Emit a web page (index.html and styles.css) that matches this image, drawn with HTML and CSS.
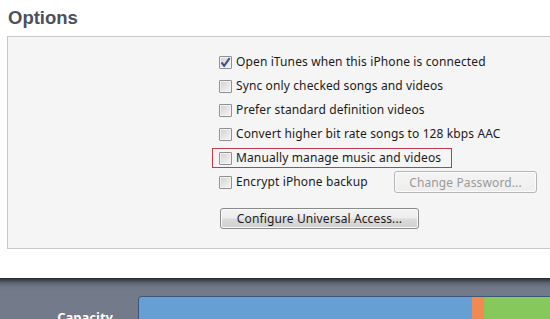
FILE: index.html
```html
<!DOCTYPE html>
<html>
<head>
<meta charset="utf-8">
<link rel="stylesheet" href="styles.css">
</head>
<body>
<h2 class="title">Options</h2>
<div class="box">
  <div class="opts">
    <label class="row"><span class="cb checked"><svg width="11" height="11" viewBox="0 0 11 11"><path d="M1.5 5.5 L4.2 8.8 L9.6 1.2" fill="none" stroke="#3b4f8a" stroke-width="2"/></svg></span><span class="lbl">Open iTunes when this iPhone is connected</span></label>
    <label class="row"><span class="cb"></span><span class="lbl">Sync only checked songs and videos</span></label>
    <label class="row"><span class="cb"></span><span class="lbl">Prefer standard definition videos</span></label>
    <label class="row"><span class="cb"></span><span class="lbl">Convert higher bit rate songs to 128 kbps AAC</span></label>
    <label class="row highlight"><span class="cb"></span><span class="lbl">Manually manage music and videos</span></label>
    <div class="row">
      <label class="pair"><span class="cb"></span><span class="lbl">Encrypt iPhone backup</span></label>
      <button class="btn disabled">Change Password...</button>
    </div>
    <div class="btnrow"><button class="btn">Configure Universal Access...</button></div>
  </div>
</div>
<div class="footer">
  <div class="caplabel">Capacity</div>
  <div class="bar">
    <div class="seg blue"></div>
    <div class="seg orange"></div>
    <div class="seg green"></div>
  </div>
</div>
</body>
</html>
```
FILE: styles.css
```css
html, body {
  margin: 0;
  padding: 0;
  background: #ffffff;
  overflow: hidden;
  width: 550px;
  height: 319px;
}
body {
  font-family: "Noto Sans", "Open Sans", sans-serif;
  font-size: 12px;
  color: #1b1b1b;
}
.title {
  margin: 0;
  padding: 8px 0 0 8px;
  height: 36px;
  box-sizing: border-box;
  font-family: "Liberation Sans", Arial, sans-serif;
  font-weight: bold;
  font-size: 18.5px;
  color: #4b505b;
  line-height: 20px;
}
.box {
  margin-left: 7px;
  width: 543px;
  height: 213px;
  box-sizing: border-box;
  border: 1px solid #c8c8c8;
  border-right: none;
  background: #f5f5f5;
}
.opts {
  padding: 13px 0 0 211px;
  display: flex;
  flex-direction: column;
}
.row {
  display: flex;
  align-items: center;
  height: 24px;
}
.pair {
  display: flex;
  align-items: center;
  width: 175px;
  flex: none;
}
.highlight {
  margin-left: -7px;
  padding-left: 6px;
  width: 240px;
  height: 20px;
  margin-top: 2px;
  margin-bottom: 2px;
  border: 1px solid #c33b4f;
  box-sizing: border-box;
}
.cb {
  width: 13px;
  height: 13px;
  box-sizing: border-box;
  border: 1px solid #8f9090;
  border-radius: 1px;
  background: linear-gradient(135deg, #d0d0d0 0%, #e6e6e6 55%, #f6f6f6 100%);
  box-shadow: inset 0 0 0 1px #f4f4f4;
  position: relative;
  flex: none;
}
.cb svg {
  position: absolute;
  left: 0;
  top: 0;
}
.lbl {
  margin-left: 4px;
  white-space: nowrap;
  line-height: 16px;
  letter-spacing: 0.12px;
}
.btn {
  font-family: "Noto Sans", "Open Sans", sans-serif;
  font-size: 12px;
  color: #1b1b1b;
  border: 1px solid #8a8a8a;
  border-radius: 3px;
  background: linear-gradient(#f4f4f4 0%, #ececec 48%, #dcdcdc 52%, #cfcfcf 100%);
  box-shadow: inset 0 0 0 1px #fbfbfb;
  padding: 0;
  height: 21px;
  line-height: 17px;
  letter-spacing: 0.12px;
}
.btn.disabled {
  width: 143px;
  height: 22px;
  color: #9a9a9a;
  border-color: #b6b6b6;
  background: linear-gradient(#f4f4f4, #eeeeee);
}
.btnrow {
  padding-top: 14px;
  padding-left: 1px;
}
.btnrow .btn {
  width: 199px;
}
.footer {
  margin-top: 29px;
  height: 41px;
  background: linear-gradient(#23272e 0px, #3b414b 2px, #5d6472 5px, #6f7787 9px, #737b8b 14px);
  display: flex;
  align-items: flex-start;
  padding-top: 18px;
  box-sizing: border-box;
  overflow: hidden;
}
.caplabel {
  width: 113px;
  padding-top: 13px;
  text-align: right;
  font-family: "Noto Sans", "Open Sans", sans-serif;
  font-weight: bold;
  font-size: 13px;
  color: #ffffff;
  line-height: 16px;
}
.bar {
  margin-left: 25px;
  flex: 1;
  height: 40px;
  display: flex;
  border-top: 1px solid #3c5878;
  border-left: 1px solid #3c5878;
  border-radius: 4px 0 0 0;
  overflow: hidden;
}
.seg { height: 100%; }
.blue { width: 333px; background: #669fd3; }
.orange { width: 12px; background: #f18a52; }
.green { flex: 1; background: #86c85b; }
```
